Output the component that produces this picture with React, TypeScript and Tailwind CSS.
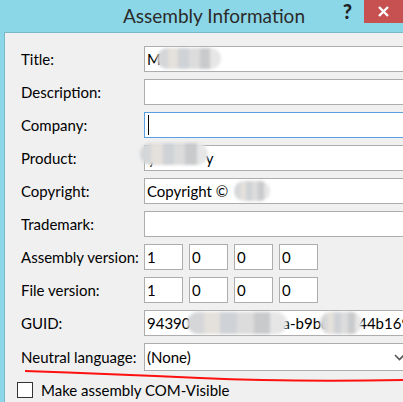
import { ReactNode } from 'react';

function Blur({ className }: { className: string }) {
  // mosaic-style smudge that hides private text in the screenshot
  return (
    <span className={`absolute flex overflow-hidden rounded-full blur-[1.5px] ${className}`}>
      <span className="flex-1 bg-[#d4d6d8]" />
      <span className="flex-1 bg-[#e4e0dc]" />
      <span className="flex-1 bg-[#cfd2d6]" />
      <span className="flex-1 bg-[#dcdcdc]" />
      <span className="flex-1 bg-[#c9cacc]" />
      <span className="flex-1 bg-[#e6e6e6]" />
    </span>
  );
}

function Field({ label, children, focused }: { label: string; children?: ReactNode; focused?: boolean }) {
  return (
    <div className="flex items-center">
      <span className="w-[123px] shrink-0 whitespace-nowrap">{label}</span>
      <div
        className={`relative flex h-[26px] w-[300px] shrink-0 items-center whitespace-nowrap border bg-white px-[2px] ${
          focused ? 'border-[#5b9fe3]' : 'border-[#adadad]'
        }`}
      >
        {children}
      </div>
    </div>
  );
}

function VersionRow({ label }: { label: string }) {
  return (
    <div className="flex items-center">
      <span className="w-[123px] shrink-0 whitespace-nowrap">{label}</span>
      <div className="flex gap-[6px]">
        {['1', '0', '0', '0'].map((v, i) => (
          <div key={i} className="flex h-[26px] w-[39px] items-center border border-[#adadad] bg-white px-[2px]">
            {v}
          </div>
        ))}
      </div>
    </div>
  );
}

export default function App() {
  return (
    <div
      className="relative h-[402px] w-[403px] overflow-hidden bg-[#8bd7e8] text-[15px] leading-[20px] text-black"
      style={{ fontFamily: 'Lato, "Open Sans", sans-serif' }}
    >
      <div className="flex h-[32px] items-start">
        <span className="ml-[123px] mt-[3px] whitespace-nowrap text-[19px] leading-[26px] text-[#2b2b2b]">
          Assembly Information
        </span>
        <span className="ml-auto mr-[12px] mt-[2px] text-[20px] font-black leading-[18px] text-[#222]">?</span>
        <div className="flex h-[23px] w-[39px] shrink-0 items-center justify-center bg-[#c75050]">
          <svg width="11" height="11" viewBox="0 0 11 11">
            <path d="M1 1 L10 10 M10 1 L1 10" stroke="white" strokeWidth="2.4" />
          </svg>
        </div>
      </div>

      <div className="ml-[4px] h-[370px] border-l border-t border-[#79b9c9] bg-[#f0f0f0] pl-[16px] pt-[13px]">
        <div className="flex flex-col gap-[7px]">
          <Field label="Title:">
            <span>M</span>
            <Blur className="left-[12px] top-[1px] h-[21px] w-[64px]" />
          </Field>
          <Field label="Description:" />
          <Field label="Company:" focused>
            <span className="ml-[1px] h-[20px] w-px bg-black" />
          </Field>
          <Field label="Product:">
            <span className="ml-[1px]">y</span>
            <span className="ml-[50px]">y</span>
            <Blur className="left-[-5px] top-[-3px] h-[22px] w-[68px]" />
          </Field>
          <Field label="Copyright:">
            <span>Copyright ©</span>
            <Blur className="left-[89px] top-[2px] h-[20px] w-[36px]" />
          </Field>
          <Field label="Trademark:" />
          <VersionRow label="Assembly version:" />
          <VersionRow label="File version:" />
          <Field label="GUID:">
            <span>94390</span>
            <span className="ml-[92px]">a-b9bc</span>
            <span className="ml-[30px]">44b169</span>
            <Blur className="left-[42px] top-[1px] h-[22px] w-[100px]" />
            <Blur className="left-[175px] top-[1px] h-[22px] w-[42px]" />
          </Field>
          <div className="flex items-center">
            <span className="w-[123px] shrink-0 whitespace-nowrap">Neutral language:</span>
            <div className="flex h-[28px] w-[300px] shrink-0 items-center border border-[#adadad] bg-white px-[2px]">
              <span>(None)</span>
              <svg className="ml-[203px]" width="11" height="7" viewBox="0 0 11 7">
                <path d="M1 1 L5.5 5.5 L10 1" stroke="#555" strokeWidth="1.6" fill="none" />
              </svg>
            </div>
          </div>
        </div>
        <div className="-ml-[4px] mt-[9px] flex items-center gap-[8px]">
          <span className="h-[16px] w-[16px] border border-[#333] bg-white" />
          <span className="whitespace-nowrap">Make assembly COM-Visible</span>
        </div>
      </div>

      <svg className="pointer-events-none absolute left-0 top-0" width="403" height="402">
        <path d="M25 371 Q 110 374 200 378 T 403 380" stroke="#ff1010" strokeWidth="2" fill="none" />
      </svg>
    </div>
  );
}
